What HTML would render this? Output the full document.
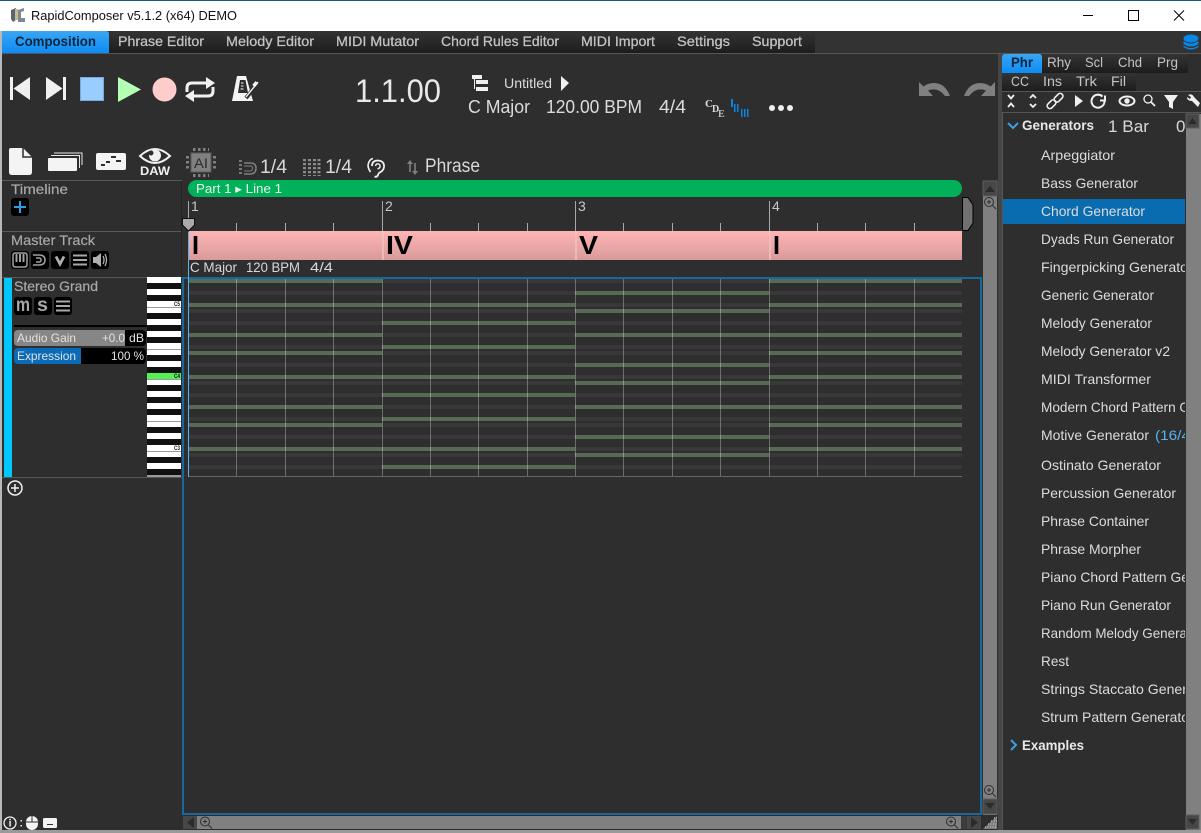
<!DOCTYPE html>
<html><head><meta charset="utf-8"><title>RapidComposer</title>
<style>
html,body{margin:0;padding:0;background:#2e2e2e;overflow:hidden}
svg{display:block}
text{font-family:"Liberation Sans",sans-serif}
</style></head><body>
<svg xmlns="http://www.w3.org/2000/svg" width="1201" height="833" viewBox="0 0 1201 833">
<defs>
<linearGradient id="blue" x1="0" y1="0" x2="0" y2="1"><stop offset="0" stop-color="#3aa6f2"/><stop offset="1" stop-color="#0c8cf5"/></linearGradient>
<linearGradient id="menu" x1="0" y1="0" x2="0" y2="1"><stop offset="0" stop-color="#343434"/><stop offset="1" stop-color="#1d1d1d"/></linearGradient>
<linearGradient id="pink" x1="0" y1="0" x2="0" y2="1"><stop offset="0" stop-color="#ffb5b5"/><stop offset="1" stop-color="#d99a9a"/></linearGradient>
<clipPath id="listclip"><rect x="1003" y="113" width="182" height="717"/></clipPath>
</defs>
<rect width="1201" height="833" fill="#2e2e2e"/>

<!-- title bar -->
<rect width="1201" height="31" fill="#fff"/>
<rect width="1201" height="1" fill="#1b5a80"/>
<g>
<path d="M11 10 L16 8 V20 L13 22 L11 19Z" fill="#5a6470"/><path d="M18 10 L24 8 V11 L21 12 V18 L25 18 V22 L18 22Z" fill="#7d8a94"/><rect x="15" y="9" width="3" height="11" fill="#c9b98a"/>
<text x="31" y="20" font-size="13" fill="#111" textLength="206" lengthAdjust="spacingAndGlyphs">RapidComposer v5.1.2 (x64) DEMO</text>
<rect x="1083" y="15" width="10" height="1" fill="#000"/>
<rect x="1128.5" y="10.5" width="10" height="10" fill="none" stroke="#000"/>
<path d="M1174 10.5 L1184 20.5 M1184 10.5 L1174 20.5" stroke="#000" fill="none"/>
</g>

<!-- left edge + bottom edge -->
<rect x="0" y="31" width="2" height="802" fill="#b8b8b8"/>
<rect x="0" y="830" width="1201" height="3" fill="#9a9a9a"/>

<!-- menu -->
<rect x="2" y="31" width="1199" height="22" fill="#333"/>
<rect x="2" y="31" width="813" height="22" fill="url(#menu)"/>
<rect x="2" y="53" width="1199" height="1" fill="#565656"/>
<path d="M2 53 V31 H106 Q109 31 109 34 V53Z" fill="url(#blue)"/>
<g font-size="14" fill="#c4c4c4" font-weight="700">
<text x="15" y="46" fill="#06243d" textLength="81" lengthAdjust="spacingAndGlyphs">Composition</text>
<text x="118" y="46" textLength="86" lengthAdjust="spacingAndGlyphs" font-weight="400" stroke="#c4c4c4" stroke-width=".25">Phrase Editor</text>
<text x="226" y="46" textLength="88" lengthAdjust="spacingAndGlyphs" font-weight="400" stroke="#c4c4c4" stroke-width=".25">Melody Editor</text>
<text x="336" y="46" textLength="83" lengthAdjust="spacingAndGlyphs" font-weight="400" stroke="#c4c4c4" stroke-width=".25">MIDI Mutator</text>
<text x="441" y="46" textLength="118" lengthAdjust="spacingAndGlyphs" font-weight="400" stroke="#c4c4c4" stroke-width=".25">Chord Rules Editor</text>
<text x="581" y="46" textLength="74" lengthAdjust="spacingAndGlyphs" font-weight="400" stroke="#c4c4c4" stroke-width=".25">MIDI Import</text>
<text x="677" y="46" textLength="53" lengthAdjust="spacingAndGlyphs" font-weight="400" stroke="#c4c4c4" stroke-width=".25">Settings</text>
<text x="752" y="46" textLength="50" lengthAdjust="spacingAndGlyphs" font-weight="400" stroke="#c4c4c4" stroke-width=".25">Support</text>
</g>
<!-- db icon -->
<g fill="#0a86e6"><ellipse cx="1191" cy="38.5" rx="7.5" ry="4"/><path d="M1183.5 41 Q1191 46 1198.5 41 V44 Q1191 49 1183.5 44Z"/><path d="M1183.5 45.5 Q1191 50.5 1198.5 45.5 V47 Q1191 52 1183.5 47Z"/></g>

<!-- transport -->
<g fill="#f0f0f0">
<rect x="10" y="77" width="3" height="23"/><path d="M30 77 V100 L13.5 88.5Z"/>
<path d="M46 77 V100 L62.5 88.5Z"/><rect x="63" y="77" width="3" height="23"/>
</g>
<rect x="80.500" y="77.500" width="23" height="23" fill="#99ccff" stroke="#7aa8d8"/>
<path d="M118 77 L141 89.500 L118 102Z" fill="#b3ffb3"/>
<circle cx="164.500" cy="89.500" r="12" fill="#ffcccc"/>
<g fill="none" stroke="#f0f0f0" stroke-width="3">
<path d="M187 92 V88 Q187 83 192 83 H208"/><path d="M213 87 V91 Q213 96 208 96 H192"/></g>
<path d="M206 77 L215 83 L206 89Z M194 90 L185 96 L194 102Z" fill="#f0f0f0"/>
<!-- metronome -->
<path d="M237 76 H246 L253 101 H232Z" fill="#f4f4f4"/>
<path d="M240 80 H245.500 L248 93 H238Z" fill="#2e2e2e"/>
<path d="M241 83h2.500M241 86h2.500M240.500 89h3" stroke="#f4f4f4"/>
<path d="M246 98 L259 82" stroke="#2e2e2e" stroke-width="4"/><path d="M246 97 L258 82" stroke="#f4f4f4" stroke-width="1.400"/><rect x="252.500" y="82.500" width="5" height="3.500" fill="#f4f4f4" transform="rotate(-50 255 84)"/>

<text x="355" y="102" font-size="32" fill="#e8e8e8" textLength="86" lengthAdjust="spacingAndGlyphs">1.1.00</text>

<!-- tree icon -->
<g fill="#f0f0f0"><rect x="472" y="75" width="10" height="4"/><rect x="476" y="80" width="12" height="4"/><rect x="476" y="87" width="12" height="4"/><rect x="474" y="79" width="1" height="10"/></g>
<text x="504" y="88" font-size="14" fill="#dcdcdc" textLength="48" lengthAdjust="spacingAndGlyphs">Untitled</text>
<path d="M561 76 L569 83 L561 91Z" fill="#f0f0f0"/>
<g font-size="18" fill="#dcdcdc">
<text x="468" y="113" textLength="62" lengthAdjust="spacingAndGlyphs">C Major</text>
<text x="546" y="113" textLength="96" lengthAdjust="spacingAndGlyphs">120.00 BPM</text>
<text x="659" y="113" textLength="27" lengthAdjust="spacingAndGlyphs">4/4</text>
</g>
<g font-weight="700">
<text x="705" y="107" font-size="11" fill="#ddd" style="font-family:'Liberation Serif',serif">C</text>
<text x="712" y="112" font-size="10" fill="#ddd" style="font-family:'Liberation Serif',serif">D</text>
<text x="718" y="117" font-size="10" fill="#bbb" style="font-family:'Liberation Serif',serif">E</text>
</g>
<g fill="#0a84e0"><rect x="731" y="99" width="2" height="8"/><rect x="734" y="104" width="1.500" height="8"/><rect x="737" y="104" width="1.500" height="8"/><rect x="741" y="109" width="1.500" height="8"/><rect x="744" y="109" width="1.500" height="8"/><rect x="747" y="109" width="1.500" height="8"/></g>
<g fill="#f0f0f0"><circle cx="772" cy="108" r="3"/><circle cx="781" cy="108" r="3"/><circle cx="790" cy="108" r="3"/></g>

<!-- undo / redo -->
<path d="M919 82 V96 H933 L928 90.500 Q938 86.500 945 96 H950 Q945 83 934 83 Q928 83 923.500 86.500Z" fill="#808080"/>
<path d="M995 82 V96 H981 L986 90.500 Q976 86.500 969 96 H964 Q969 83 980 83 Q986 83 990.500 86.500Z" fill="#808080"/>

<!-- second toolbar -->
<path d="M11 148 H23 L32 157 V172 Q32 175 29 175 H12 Q9 175 9 172 V150 Q9 148 11 148Z" fill="#f4f4f4"/><path d="M23 148 V157 H32" fill="none" stroke="#2e2e2e" stroke-width="1.500"/>
<g><path d="M54 153 H82 V165" fill="none" stroke="#e8e8e8"/><path d="M51 155.500 H79.500 V168" fill="none" stroke="#e8e8e8"/><rect x="48" y="158" width="29" height="13" rx="1" fill="#f4f4f4"/></g>
<rect x="96" y="153" width="30" height="17" rx="2" fill="#f4f4f4"/>
<g fill="#2e2e2e"><rect x="101" y="164" width="4" height="2"/><rect x="106" y="161" width="4" height="2"/><rect x="111" y="156" width="5" height="2"/><rect x="116" y="160" width="5" height="2"/></g>
<path d="M140 156 Q155 142 170 156 Q155 170 140 156Z" fill="none" stroke="#f0f0f0" stroke-width="2"/><circle cx="155" cy="155.500" r="6" fill="#f0f0f0"/><circle cx="151" cy="153" r="2.500" fill="#2e2e2e"/>
<text x="140" y="175" font-size="12" font-weight="700" fill="#f0f0f0" textLength="30" lengthAdjust="spacingAndGlyphs">DAW</text>
<!-- AI chip -->
<rect x="191" y="153" width="20" height="19" fill="#808080" stroke="#5c5c5c"/>
<text x="194" y="168" font-size="14" fill="#2a2a2a" textLength="14" lengthAdjust="spacingAndGlyphs">AI</text>
<path d="M193 149.500h16M193 175.500h16M187.500 156v13M214.500 156v13" stroke="#808080" stroke-width="3" stroke-dasharray="2.500 2.500" fill="none"/>
<!-- quantize icons -->
<path d="M240.500 160v16" stroke="#777" stroke-width="3" stroke-dasharray="2 2"/>
<path d="M244 163 H250 Q256 163 256 168 Q256 174 250 174 H244" fill="none" stroke="#808080" stroke-width="1.500"/><path d="M244 166 H250 Q252.500 166 252.500 168 Q252.500 171 250 171 H244" fill="none" stroke="#808080" stroke-width="1"/>
<text x="260" y="173" font-size="19" fill="#d8d8d8" textLength="27" lengthAdjust="spacingAndGlyphs">1/4</text>
<path d="M304.500 159v17M309.500 159v17M314.500 159v17M319 159v17" stroke="#8a8a8a" stroke-width="3" stroke-dasharray="2.200 1.800" fill="none"/>
<text x="325" y="173" font-size="19" fill="#d8d8d8" textLength="27" lengthAdjust="spacingAndGlyphs">1/4</text>
<!-- ear -->
<path d="M370.500 172 Q367 167 368.500 163 Q370 159 373 158.500" fill="none" stroke="#f0f0f0" stroke-width="1.600"/>
<path d="M372 166 Q372 160.500 378 160.500 Q384.500 161 384 167 Q383.500 170.500 380.500 172 Q378.500 173 378 175 Q377 177.500 374.500 176.500" fill="none" stroke="#f0f0f0" stroke-width="1.800"/>
<path d="M375.500 166 Q376 163.500 378 163.800 Q380.500 164.200 380 167 Q379.500 168.500 377.500 168.800" fill="none" stroke="#f0f0f0" stroke-width="1.400"/>
<path d="M410 160 L407 164 H409.200 V172 H410.800 V164 H413Z M415 175 L412 171 H414.200 V163 H415.800 V171 H418Z" fill="#808080"/>
<text x="425" y="172" font-size="19" fill="#d8d8d8" textLength="55" lengthAdjust="spacingAndGlyphs">Phrase</text>

<!-- track headers -->
<g fill="#585858">
<rect x="2" y="180" width="180" height="1"/><rect x="2" y="231" width="180" height="1"/><rect x="2" y="277" width="180" height="1"/><rect x="2" y="477" width="180" height="1"/>
</g>
<rect x="181" y="181" width="1" height="96" fill="#232323"/>
<g font-size="14" fill="#a8a8a8" font-weight="400">
<text x="11" y="194" textLength="57" lengthAdjust="spacingAndGlyphs" stroke="#a8a8a8" stroke-width=".2">Timeline</text>
<text x="11" y="245" textLength="84" lengthAdjust="spacingAndGlyphs" stroke="#a8a8a8" stroke-width=".2">Master Track</text>
<text x="14" y="291" textLength="84" lengthAdjust="spacingAndGlyphs" stroke="#a8a8a8" stroke-width=".2">Stereo Grand</text>
</g>
<rect x="11" y="198" width="18" height="18" rx="3" fill="#000"/>
<path d="M14 207 H26 M20 201 V213" stroke="#2aa0ea" stroke-width="2"/>
<!-- master buttons -->
<g fill="#000"><rect x="11" y="251" width="18" height="18" rx="3"/><rect x="31" y="251" width="18" height="18" rx="3"/><rect x="51" y="251" width="18" height="18" rx="3"/><rect x="71" y="251" width="18" height="18" rx="3"/><rect x="91" y="251" width="18" height="18" rx="3"/></g>
<rect x="13" y="253" width="14" height="14" rx="2" fill="none" stroke="#a0a0a0" stroke-width="1.500"/><path d="M16.500 254v8M20 254v8M23.500 254v8" stroke="#a0a0a0" stroke-width="2"/>
<path d="M33 255 H39 Q45 255 45 260 Q45 265 39 265 H33 M36 258 H39 Q41 258 41 260 Q41 262 39 262 H36" fill="none" stroke="#a0a0a0" stroke-width="1.500"/>
<path d="M56 256.500 L60 264 L64 256.500" fill="none" stroke="#b0b0b0" stroke-width="2.800"/>
<path d="M73 255.500 H87 M73 260 H87 M73 264.500 H87" stroke="#a8a8a8" stroke-width="2"/>
<path d="M93 257 H96 L101 253 V267 L96 263 H93Z" fill="#b0b0b0"/><path d="M103 256 Q105 260 103 264 M105 254 Q108 260 105 266" fill="none" stroke="#b0b0b0" stroke-width="1.300"/>

<!-- stereo grand -->
<rect x="4" y="278" width="8" height="199" fill="#00c8ff"/>
<g fill="#000"><rect x="14" y="297" width="18" height="18" rx="3"/><rect x="34" y="297" width="18" height="18" rx="3"/><rect x="54" y="297" width="18" height="18" rx="3"/></g>
<text x="16" y="311" font-size="19" font-weight="700" fill="#a8a8a8" textLength="14" lengthAdjust="spacingAndGlyphs">m</text>
<text x="37" y="311" font-size="19" font-weight="700" fill="#a8a8a8" textLength="11" lengthAdjust="spacingAndGlyphs">s</text>
<path d="M56 301.500 H70 M56 306 H70 M56 310.500 H70" stroke="#a8a8a8" stroke-width="2"/>
<rect x="14" y="325" width="133" height="2" fill="#000"/>
<rect x="14" y="330" width="132" height="16" rx="4" fill="#000"/>
<path d="M18 330 H125 V346 H18 Q14 346 14 342 V334 Q14 330 18 330Z" fill="#868686"/>
<rect x="14" y="348" width="132" height="16" rx="4" fill="#000"/>
<path d="M18 348 H81 V364 H18 Q14 364 14 360 V352 Q14 348 18 348Z" fill="#0a6cb8"/>
<g font-size="12" fill="#e2e2e2">
<text x="17" y="342" textLength="59" lengthAdjust="spacingAndGlyphs">Audio Gain</text>
<text x="102" y="342" textLength="23" lengthAdjust="spacingAndGlyphs">+0.0</text>
<text x="129" y="342" textLength="15" lengthAdjust="spacingAndGlyphs">dB</text>
<text x="17" y="360" textLength="59" lengthAdjust="spacingAndGlyphs">Expression</text>
<text x="111" y="360" textLength="33" lengthAdjust="spacingAndGlyphs">100 %</text>
</g>

<!-- piano -->
<rect x="147" y="277" width="34" height="200" fill="#fff"/>
<g fill="#111">
<rect x="147" y="283" width="34" height="6"/><rect x="147" y="295" width="34" height="6"/><rect x="147" y="313" width="34" height="6"/><rect x="147" y="325" width="34" height="6"/><rect x="147" y="337" width="34" height="6"/><rect x="147" y="355" width="34" height="6"/><rect x="147" y="367" width="34" height="6"/><rect x="147" y="385" width="34" height="6"/><rect x="147" y="397" width="34" height="6"/><rect x="147" y="409" width="34" height="6"/><rect x="147" y="427" width="34" height="6"/><rect x="147" y="439" width="34" height="6"/><rect x="147" y="457" width="34" height="6"/><rect x="147" y="469" width="34" height="6"/>
</g>
<g fill="#9a9a9a"><rect x="147" y="307" width="34" height="1"/><rect x="147" y="349" width="34" height="1"/><rect x="147" y="379" width="34" height="1"/><rect x="147" y="421" width="34" height="1"/><rect x="147" y="451" width="34" height="1"/><rect x="147" y="475" width="34" height="2"/></g>
<rect x="147" y="373" width="34" height="6" fill="#55f055"/>
<g font-size="6" font-weight="700" fill="#111"><text x="174" y="306" textLength="6" lengthAdjust="spacingAndGlyphs">C5</text><text x="174" y="378" textLength="6" lengthAdjust="spacingAndGlyphs">C4</text><text x="174" y="450" textLength="6" lengthAdjust="spacingAndGlyphs">C3</text></g>

<!-- add track -->
<circle cx="15" cy="488" r="7" fill="none" stroke="#f0f0f0" stroke-width="1.500"/><path d="M11 488 H19 M15 484 V492" stroke="#f0f0f0" stroke-width="1.500"/>

<!-- timeline -->
<rect x="188" y="180" width="774" height="17" rx="8.500" fill="#00b15a"/>
<text x="196" y="193" font-size="12.500" fill="#e8f5ec" textLength="86" lengthAdjust="spacingAndGlyphs">Part 1 ▸ Line 1</text>
<g fill="#a8a8a8">
<rect x="188" y="201" width="1" height="30"/><rect x="382" y="201" width="1" height="30"/><rect x="575" y="201" width="1" height="30"/><rect x="769" y="201" width="1" height="30"/>
<rect x="236" y="223" width="1" height="8"/><rect x="285" y="223" width="1" height="8"/><rect x="333" y="223" width="1" height="8"/><rect x="430" y="223" width="1" height="8"/><rect x="478" y="223" width="1" height="8"/><rect x="527" y="223" width="1" height="8"/><rect x="623" y="223" width="1" height="8"/><rect x="672" y="223" width="1" height="8"/><rect x="720" y="223" width="1" height="8"/><rect x="817" y="223" width="1" height="8"/><rect x="865" y="223" width="1" height="8"/><rect x="914" y="223" width="1" height="8"/>
</g>
<g font-size="14" fill="#c8c8c8"><text x="191" y="211">1</text><text x="385" y="211">2</text><text x="578" y="211">3</text><text x="772" y="211">4</text></g>
<path d="M962.500 197.500 L968 197.500 L973 205 V223 L968 230.500 H962.500Z" fill="#707070" stroke="#000"/>

<!-- chord track -->
<rect x="188" y="231" width="774" height="29" fill="url(#pink)"/>
<g fill="#efc4c4" opacity=".7"><rect x="382" y="231" width="2" height="29"/><rect x="575" y="231" width="2" height="29"/><rect x="769" y="231" width="2" height="29"/></g>
<g font-size="26" font-weight="700" fill="#000">
<text x="192" y="254" textLength="7" lengthAdjust="spacingAndGlyphs">I</text>
<text x="386" y="254" textLength="27" lengthAdjust="spacingAndGlyphs">IV</text>
<text x="579" y="254" textLength="19" lengthAdjust="spacingAndGlyphs">V</text>
<text x="773" y="254" textLength="7" lengthAdjust="spacingAndGlyphs">I</text>
</g>
<text x="190" y="272" font-size="14" fill="#d8d8d8" textLength="47" lengthAdjust="spacingAndGlyphs">C Major</text>
<text x="246" y="272" font-size="14" fill="#d8d8d8" textLength="54" lengthAdjust="spacingAndGlyphs">120 BPM</text>
<text x="310" y="272" font-size="14" fill="#d8d8d8" textLength="23" lengthAdjust="spacingAndGlyphs">4/4</text>

<!-- piano roll -->
<g fill="#383838">
<rect x="188" y="279" width="774" height="4"/><rect x="188" y="291" width="774" height="4"/><rect x="188" y="303" width="774" height="4"/><rect x="188" y="309" width="774" height="4"/><rect x="188" y="321" width="774" height="4"/><rect x="188" y="333" width="774" height="4"/><rect x="188" y="345" width="774" height="4"/><rect x="188" y="351" width="774" height="4"/><rect x="188" y="363" width="774" height="4"/><rect x="188" y="375" width="774" height="4"/><rect x="188" y="381" width="774" height="4"/><rect x="188" y="393" width="774" height="4"/><rect x="188" y="405" width="774" height="4"/><rect x="188" y="417" width="774" height="4"/><rect x="188" y="423" width="774" height="4"/><rect x="188" y="435" width="774" height="4"/><rect x="188" y="447" width="774" height="4"/><rect x="188" y="453" width="774" height="4"/><rect x="188" y="465" width="774" height="4"/>
</g>
<g fill="#566a54">
<rect x="188" y="279" width="194" height="4"/><rect x="188" y="303" width="194" height="4"/><rect x="188" y="333" width="194" height="4"/><rect x="188" y="351" width="194" height="4"/><rect x="188" y="375" width="194" height="4"/><rect x="188" y="405" width="194" height="4"/><rect x="188" y="423" width="194" height="4"/><rect x="188" y="447" width="194" height="4"/>
<rect x="382" y="303" width="193" height="4"/><rect x="382" y="321" width="193" height="4"/><rect x="382" y="345" width="193" height="4"/><rect x="382" y="375" width="193" height="4"/><rect x="382" y="393" width="193" height="4"/><rect x="382" y="417" width="193" height="4"/><rect x="382" y="447" width="193" height="4"/><rect x="382" y="465" width="193" height="4"/>
<rect x="575" y="291" width="194" height="4"/><rect x="575" y="309" width="194" height="4"/><rect x="575" y="333" width="194" height="4"/><rect x="575" y="363" width="194" height="4"/><rect x="575" y="381" width="194" height="4"/><rect x="575" y="405" width="194" height="4"/><rect x="575" y="435" width="194" height="4"/><rect x="575" y="453" width="194" height="4"/>
<rect x="769" y="279" width="193" height="4"/><rect x="769" y="303" width="193" height="4"/><rect x="769" y="333" width="193" height="4"/><rect x="769" y="351" width="193" height="4"/><rect x="769" y="375" width="193" height="4"/><rect x="769" y="405" width="193" height="4"/><rect x="769" y="423" width="193" height="4"/><rect x="769" y="447" width="193" height="4"/>
</g>
<g fill="#fff" fill-opacity=".3">
<rect x="236" y="277" width="1" height="199"/><rect x="285" y="277" width="1" height="199"/><rect x="333" y="277" width="1" height="199"/><rect x="382" y="277" width="1" height="199"/><rect x="430" y="277" width="1" height="199"/><rect x="478" y="277" width="1" height="199"/><rect x="527" y="277" width="1" height="199"/><rect x="575" y="277" width="1" height="199"/><rect x="623" y="277" width="1" height="199"/><rect x="672" y="277" width="1" height="199"/><rect x="720" y="277" width="1" height="199"/><rect x="769" y="277" width="1" height="199"/><rect x="817" y="277" width="1" height="199"/><rect x="865" y="277" width="1" height="199"/><rect x="914" y="277" width="1" height="199"/>
</g>
<rect x="188" y="476" width="774" height="1" fill="#666"/>
<!-- blue frame -->
<rect x="183" y="278" width="798" height="536" fill="none" stroke="#17689f" stroke-width="2"/>
<rect x="188" y="218" width="1" height="259" fill="#5ab0ee"/>
<path d="M182.500 218.500 H194.500 V225 L188.500 231 L182.500 225Z" fill="#aaa" stroke="#111"/>

<!-- vertical scrollbar -->
<rect x="983" y="181" width="14" height="634" fill="#808080"/>
<rect x="983" y="181" width="14" height="15" fill="#474747" stroke="#5e5e5e"/>
<path d="M985 192 L990 186 L995 192Z" fill="#2b2b2b"/>
<rect x="983" y="799" width="14" height="15" fill="#474747" stroke="#5e5e5e"/>
<path d="M985 803 L990 809 L995 803Z" fill="#2b2b2b"/>
<g fill="none" stroke="#2e2e2e" stroke-width="1"><circle cx="989" cy="202" r="4.500"/><path d="M992.500 205.500 L996 209 M987 202h4M989 200v4"/><circle cx="989" cy="790" r="4.500"/><path d="M992.500 793.500 L996 797 M987 790h4M989 788v4"/></g>
<!-- horizontal scrollbar -->
<rect x="183" y="816" width="798" height="13" fill="#808080"/>
<rect x="183" y="816" width="14" height="13" fill="#474747"/><path d="M194 817 L187 822.500 L194 828Z" fill="#2b2b2b"/>
<rect x="961" y="816" width="6" height="13" fill="#3c3c3c"/>
<rect x="967" y="816" width="14" height="13" fill="#474747"/><path d="M971 817 L978 822.500 L971 828Z" fill="#2b2b2b"/>
<g fill="none" stroke="#2e2e2e"><circle cx="205" cy="821.500" r="4.500"/><path d="M208.500 825 L212 828.500 M203 821.500h4M205 819.500v4"/><circle cx="951" cy="821.500" r="4.500"/><path d="M954.500 825 L958 828.500 M949 821.500h4M951 819.500v4"/></g>
<!-- corner -->
<path d="M983 829 L997 816 V829Z" fill="#7a7a7a"/>
<path d="M985 827h12M988 824h9M991 821h6M994 818h3" stroke="#ddd" stroke-width="1" stroke-dasharray="1 1.500"/>

<!-- bottom-left -->
<circle cx="10" cy="823" r="6" fill="none" stroke="#f0f0f0" stroke-width="1.300"/><rect x="9.300" y="821" width="1.500" height="5.500" fill="#f0f0f0"/><rect x="9.300" y="818.800" width="1.500" height="1.500" fill="#f0f0f0"/>
<rect x="20.500" y="820" width="1.500" height="1.500" fill="#eee"/><rect x="20.500" y="825" width="1.500" height="1.500" fill="#eee"/>
<rect x="26" y="816" width="12" height="14" rx="6" fill="#f4f4f4"/><path d="M26 822 H38 M32 816 V822" stroke="#2e2e2e"/>
<rect x="43" y="818" width="14" height="10" rx="1.500" fill="#f4f4f4"/><rect x="47" y="824" width="6" height="1" fill="#2e2e2e"/>

<!-- right panel -->
<rect x="998" y="54" width="4" height="776" fill="#464646"/>
<rect x="1002" y="54" width="186" height="19" fill="url(#menu)"/>
<rect x="1002" y="73" width="134" height="18" fill="url(#menu)"/>
<path d="M1002 73 V57 Q1002 54 1005 54 H1039 Q1042 54 1042 57 V73Z" fill="url(#blue)"/>
<rect x="1002" y="91" width="199" height="1" fill="#555"/>
<rect x="1002" y="112" width="199" height="1" fill="#555"/>
<g font-size="14" fill="#c4c4c4">
<text x="1011" y="67" fill="#06243d" font-weight="700" textLength="22" lengthAdjust="spacingAndGlyphs">Phr</text>
<text x="1047" y="67" textLength="24" lengthAdjust="spacingAndGlyphs">Rhy</text>
<text x="1085" y="67" textLength="18" lengthAdjust="spacingAndGlyphs">Scl</text>
<text x="1118" y="67" textLength="24" lengthAdjust="spacingAndGlyphs">Chd</text>
<text x="1157" y="67" textLength="21" lengthAdjust="spacingAndGlyphs">Prg</text>
<text x="1011" y="86" textLength="18" lengthAdjust="spacingAndGlyphs">CC</text>
<text x="1043" y="86" textLength="19" lengthAdjust="spacingAndGlyphs">Ins</text>
<text x="1076" y="86" textLength="21" lengthAdjust="spacingAndGlyphs">Trk</text>
<text x="1111" y="86" textLength="15" lengthAdjust="spacingAndGlyphs">Fil</text>
</g>
<!-- panel icons -->
<g fill="none" stroke="#f0f0f0" stroke-width="1.800">
<path d="M1008 95 L1011 98.500 L1014 95 M1008 107 L1011 103.500 L1014 107"/>
<path d="M1030 98 L1033 95 L1036 98 M1030 104 L1033 107 L1036 104"/>
<rect x="1046.500" y="101.500" width="10" height="5.500" rx="2.700" stroke-width="1.600" transform="rotate(-45 1051.500 104.200)"/>
<rect x="1053.500" y="95" width="10" height="5.500" rx="2.700" stroke-width="1.600" transform="rotate(-45 1058.500 97.700)"/>
<path d="M1105 95.500 V100.500 H1100 M1104.500 101.500 A6.500 6.500 0 1 1 1102.500 96.500" stroke-width="2"/>
<ellipse cx="1127" cy="101" rx="7.500" ry="4.500" stroke-width="2"/>
<circle cx="1148" cy="99" r="4" stroke-width="1.300"/><path d="M1151 102 L1155 106" stroke-width="1.800"/>
</g>
<path d="M1075 95 L1083 101 L1075 107Z" fill="#f0f0f0"/>
<circle cx="1127" cy="101" r="2.700" fill="#f0f0f0"/>
<path d="M1164 95 H1178 L1173 102 V109 L1169 107 V102Z" fill="#f0f0f0"/>
<path d="M1188 95 Q1192 93 1194 97 L1200 103 L1198 107 L1192 101 Q1187 101 1187 97 L1190 99 L1191 97Z" fill="#f0f0f0"/>

<!-- list -->
<rect x="1002" y="113" width="1" height="717" fill="#555"/>
<rect x="1003" y="199" width="182" height="25" fill="#0a6cb0"/>
<path d="M1008 123 L1013 128 L1018 123" fill="none" stroke="#3ba0e6" stroke-width="2"/>
<text x="1022" y="130" font-size="14" font-weight="700" fill="#e8e8e8" textLength="72" lengthAdjust="spacingAndGlyphs">Generators</text>
<text x="1108" y="132" font-size="17" fill="#d8d8d8" textLength="41" lengthAdjust="spacingAndGlyphs">1 Bar</text>
<text x="1176" y="132" font-size="17" fill="#d8d8d8">0</text>
<g clip-path="url(#listclip)" font-size="14" fill="#dcdcdc">
<text x="1041" y="160" textLength="74" lengthAdjust="spacingAndGlyphs">Arpeggiator</text>
<text x="1041" y="188" textLength="97" lengthAdjust="spacingAndGlyphs">Bass Generator</text>
<text x="1041" y="216" textLength="104" lengthAdjust="spacingAndGlyphs">Chord Generator</text>
<text x="1041" y="244" textLength="133" lengthAdjust="spacingAndGlyphs">Dyads Run Generator</text>
<text x="1041" y="272" textLength="147" lengthAdjust="spacingAndGlyphs">Fingerpicking Generato</text>
<text x="1041" y="300" textLength="113" lengthAdjust="spacingAndGlyphs">Generic Generator</text>
<text x="1041" y="328" textLength="111" lengthAdjust="spacingAndGlyphs">Melody Generator</text>
<text x="1041" y="356" textLength="129" lengthAdjust="spacingAndGlyphs">Melody Generator v2</text>
<text x="1041" y="384" textLength="110" lengthAdjust="spacingAndGlyphs">MIDI Transformer</text>
<text x="1041" y="412" textLength="149" lengthAdjust="spacingAndGlyphs">Modern Chord Pattern G</text>
<text x="1041" y="440" textLength="108" lengthAdjust="spacingAndGlyphs">Motive Generator</text>
<text x="1155" y="440" fill="#55b4ee" textLength="35" lengthAdjust="spacingAndGlyphs">(16/4</text>
<text x="1041" y="470" textLength="120" lengthAdjust="spacingAndGlyphs">Ostinato Generator</text>
<text x="1041" y="498" textLength="135" lengthAdjust="spacingAndGlyphs">Percussion Generator</text>
<text x="1041" y="526" textLength="108" lengthAdjust="spacingAndGlyphs">Phrase Container</text>
<text x="1041" y="554" textLength="100" lengthAdjust="spacingAndGlyphs">Phrase Morpher</text>
<text x="1041" y="582" textLength="148" lengthAdjust="spacingAndGlyphs">Piano Chord Pattern Ge</text>
<text x="1041" y="610" textLength="130" lengthAdjust="spacingAndGlyphs">Piano Run Generator</text>
<text x="1041" y="638" textLength="146" lengthAdjust="spacingAndGlyphs">Random Melody Genera</text>
<text x="1041" y="666" textLength="28" lengthAdjust="spacingAndGlyphs">Rest</text>
<text x="1041" y="694" textLength="146" lengthAdjust="spacingAndGlyphs">Strings Staccato Gener</text>
<text x="1041" y="722" textLength="148" lengthAdjust="spacingAndGlyphs">Strum Pattern Generato</text>
</g>
<path d="M1011 740 L1016 745 L1011 750" fill="none" stroke="#3ba0e6" stroke-width="2"/>
<text x="1022" y="750" font-size="14" font-weight="700" fill="#e8e8e8" textLength="62" lengthAdjust="spacingAndGlyphs">Examples</text>

<!-- list scrollbar -->
<rect x="1186" y="114" width="15" height="716" fill="#808080"/>
<rect x="1186" y="114" width="13" height="14" fill="#474747" stroke="#5e5e5e"/>
<path d="M1188 124 L1192.500 118 L1197 124Z" fill="#2b2b2b"/>
<rect x="1186" y="815" width="13" height="14" fill="#474747" stroke="#5e5e5e"/>
<path d="M1188 819 L1192.500 825 L1197 819Z" fill="#2b2b2b"/>
</svg>
</body></html>
